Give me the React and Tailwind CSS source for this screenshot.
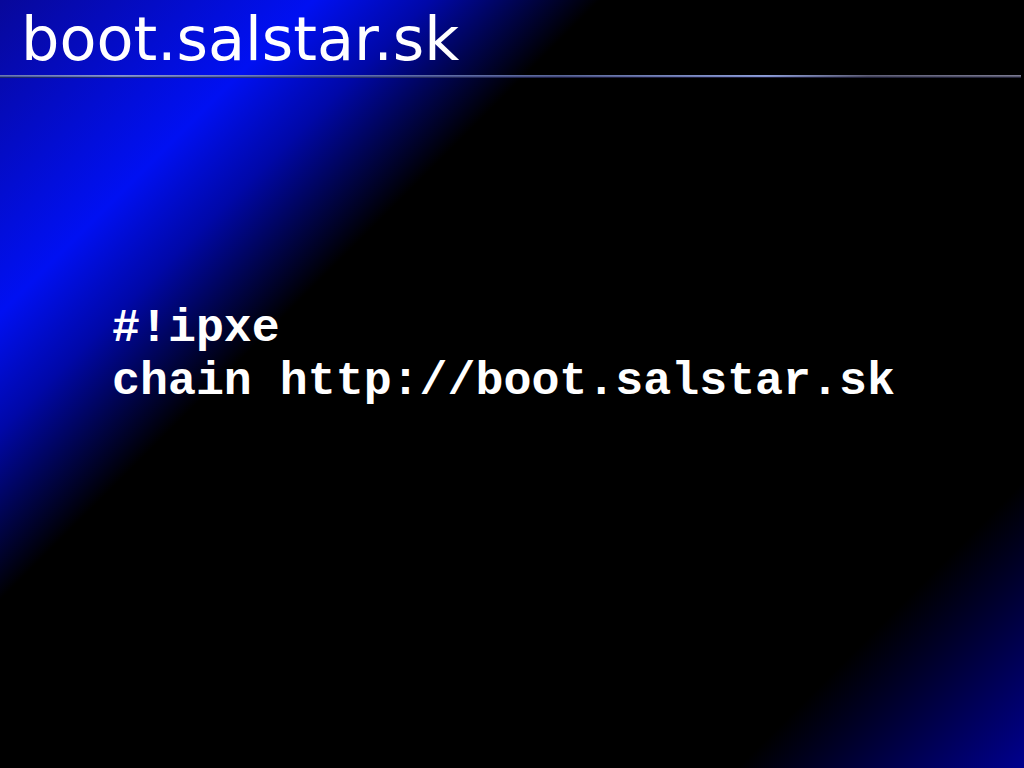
export default function App() {
  return (
    <div className="w-[1024px] h-[768px] overflow-hidden flex flex-col bg-[linear-gradient(135deg,#08089a_0%,#0010f2_17.5%,#0008a8_24%,#000000_33.5%,#000000_84%,#00008e_100%)]">
      <div className="h-[75px] pl-[21px] pt-[9px]">
        <div
          className="text-white text-[60.5px] leading-[60px]"
          style={{ fontFamily: '"DejaVu Sans", sans-serif' }}
        >
          boot.salstar.sk
        </div>
      </div>
      <div className="h-[3px] mr-[3px] flex flex-col">
        <div className="h-[1px] bg-[linear-gradient(90deg,#6a78b0_0%,#8a98d0_12%,#6070b0_30%,#5a6898_55%,#90a0d8_75%,#606078_85%,#7a7a90_100%)]" />
        <div className="h-[1px] bg-[linear-gradient(90deg,#4858a0_0%,#7080c0_12%,#4250a0_30%,#484e80_55%,#8090d0_75%,#484860_85%,#585870_100%)]" />
        <div className="h-[1px] bg-[linear-gradient(90deg,#1c2868_0%,#2a3678_30%,#1c1c3a_60%,#242438_100%)]" />
      </div>
      <div
        className="mt-[224px] pl-[112px] text-white font-bold text-[46.6px] leading-[53px] whitespace-pre"
        style={{ fontFamily: '"Liberation Mono", monospace' }}
      >
        <div>#!ipxe</div>
        <div>chain http://boot.salstar.sk</div>
      </div>
    </div>
  );
}
